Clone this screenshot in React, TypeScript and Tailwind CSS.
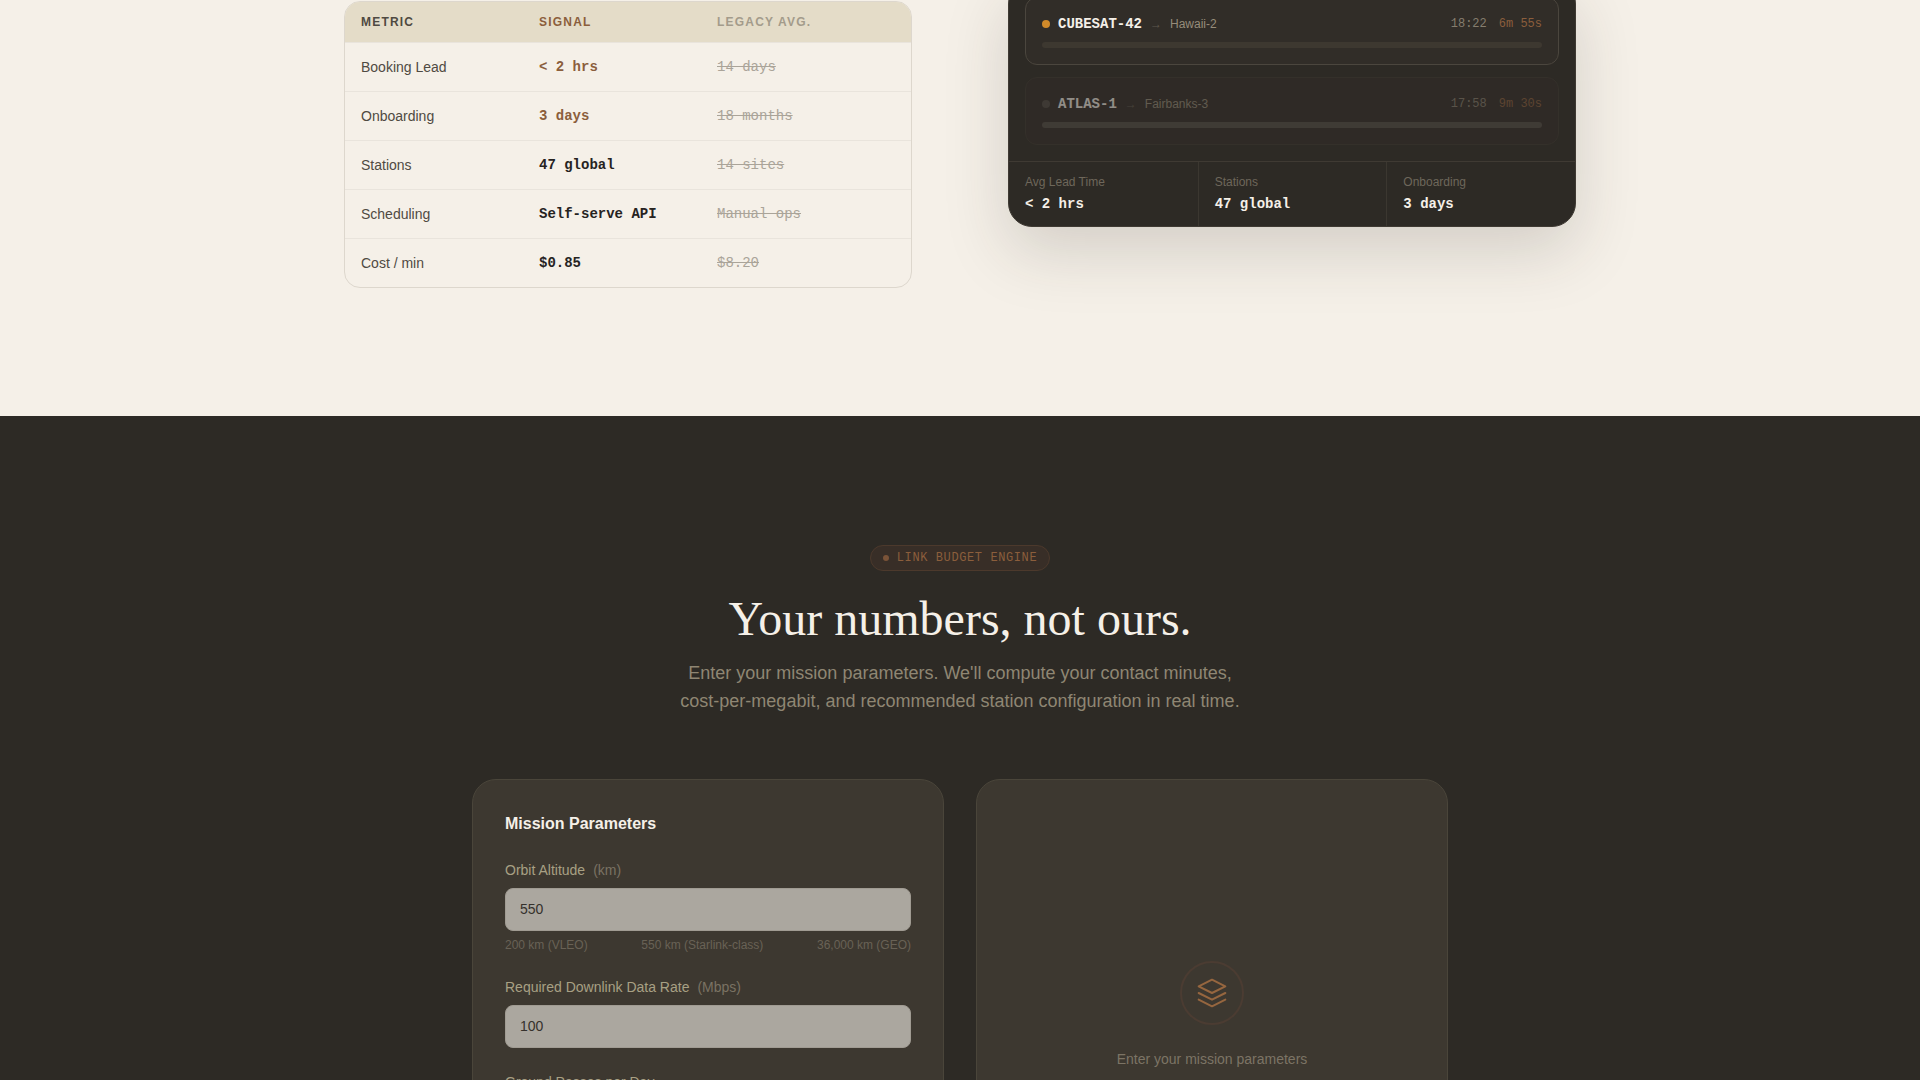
import type { ReactNode } from 'react'

const metrics = [
  { name: 'Booking Lead', signal: '< 2 hrs', legacy: '14 days', accent: true },
  { name: 'Onboarding', signal: '3 days', legacy: '18 months', accent: true },
  { name: 'Stations', signal: '47 global', legacy: '14 sites', accent: false },
  { name: 'Scheduling', signal: 'Self-serve API', legacy: 'Manual ops', accent: false },
  { name: 'Cost / min', signal: '$0.85', legacy: '$8.20', accent: false },
]

const stats = [
  { label: 'Avg Lead Time', value: '< 2 hrs' },
  { label: 'Stations', value: '47 global' },
  { label: 'Onboarding', value: '3 days' },
]

function MetricsTable() {
  return (
    <div className="mt-[21px] overflow-hidden rounded-2xl border border-[#ddd7cd]">
      <table className="block">
        <thead className="block bg-[#e4dcc8]">
          <tr className="grid grid-cols-3 px-4 py-3 text-left text-xs tracking-widest">
            <th className="font-semibold text-[#4f4a42]">METRIC</th>
            <th className="font-semibold text-[#8b5e3c]">SIGNAL</th>
            <th className="font-semibold text-[#a39b8b]">LEGACY AVG.</th>
          </tr>
        </thead>
        <tbody className="block">
          {metrics.map((m) => (
            <tr key={m.name} className="grid grid-cols-3 border-t border-[#e9e4dc] px-4 py-3.5 text-sm">
              <td className="text-[#4f4a42]">{m.name}</td>
              <td
                className={
                  m.accent
                    ? 'font-["Liberation_Mono",monospace] font-semibold text-[#8b5e3c]'
                    : 'font-["Liberation_Mono",monospace] font-semibold text-[#26231f]'
                }
              >
                {m.signal}
              </td>
              <td className='font-["Liberation_Mono",monospace] text-[#aaa499] line-through'>{m.legacy}</td>
            </tr>
          ))}
        </tbody>
      </table>
    </div>
  )
}

type PassProps = {
  name: string
  station: string
  time: string
  duration: string
  past?: boolean
}

function PassCard({ name, station, time, duration, past }: PassProps) {
  return (
    <div
      className={
        past
          ? 'rounded-xl border border-[#3b362f] bg-[#322b28] p-4 opacity-50'
          : 'rounded-xl border border-[#4b463e] bg-[#312d28] p-4'
      }
    >
      <div className="mb-2 flex items-center justify-between">
        <div className="flex items-center gap-2">
          <span className={past ? 'size-2 rounded-full bg-[#4f4943]' : 'size-2 rounded-full bg-[#d08a2a]'} />
          <span className='font-["Liberation_Mono",monospace] text-sm font-semibold text-[#f5f0e8]'>{name}</span>
          <span className="text-xs text-[#5f594e]">→</span>
          <span className="text-xs text-[#968c7a]">{station}</span>
        </div>
        <div className='flex items-center gap-3 font-["Liberation_Mono",monospace] text-xs'>
          <span className="text-[#857d6e]">{time}</span>
          <span className="text-[#8b5e3c]">{duration}</span>
        </div>
      </div>
      <div className={past ? 'h-1.5 rounded-full bg-[#524c46]' : 'h-1.5 rounded-full bg-[#3d3830]'} />
    </div>
  )
}

function PassSchedule() {
  return (
    <div className="overflow-hidden rounded-3xl border border-[#3f3a33] bg-[#2d2a25] shadow-[0_24px_64px_rgba(45,42,37,0.17)]">
      <div className="space-y-3 p-4">
        <PassCard name="CUBESAT-42" station="Hawaii-2" time="18:22" duration="6m 55s" />
        <PassCard name="ATLAS-1" station="Fairbanks-3" time="17:58" duration="9m 30s" past />
      </div>
      <div className="grid grid-cols-3 border-t border-[#3f3a33]">
        {stats.map((s, i) => (
          <div key={s.label} className={i > 0 ? 'border-l border-[#3b3730] px-4 py-3' : 'px-4 py-3'}>
            <div className="text-xs text-[#6e675b]">{s.label}</div>
            <div className='mt-1 font-["Liberation_Mono",monospace] text-sm font-semibold text-[#f5f0e8]'>
              {s.value}
            </div>
          </div>
        ))}
      </div>
    </div>
  )
}

type FieldProps = {
  id: string
  label: string
  unit: string
  value: string
  children?: ReactNode
}

function Field({ id, label, unit, value, children }: FieldProps) {
  return (
    <div>
      <label htmlFor={id} className="mb-2 flex gap-2 text-sm text-[#a8a084]">
        {label}
        <span className="text-[#7a7263]">({unit})</span>
      </label>
      <input
        id={id}
        type="text"
        defaultValue={value}
        className="block h-[43px] w-full rounded-lg border border-[#a09b92] bg-[#aba79f] px-3.5 pb-0.5 text-sm text-[#35312c]"
      />
      {children}
    </div>
  )
}

function MissionForm() {
  return (
    <form className="rounded-3xl border border-[#4a453a] bg-[#3d3830] p-8">
      <h3 className="mb-6 text-base font-semibold text-[#f5f0e8]">Mission Parameters</h3>
      <div className="space-y-6">
        <Field id="altitude" label="Orbit Altitude" unit="km" value="550">
          <div className="mt-1.5 flex justify-between text-xs text-[#696256]">
            <span>200 km (VLEO)</span>
            <span>550 km (Starlink-class)</span>
            <span>36,000 km (GEO)</span>
          </div>
        </Field>
        <Field id="rate" label="Required Downlink Data Rate" unit="Mbps" value="100" />
        <div>
          <label htmlFor="passes" className="mb-2 block text-sm text-[#a8a084]">
            Ground Passes per Day
          </label>
          <input
            id="passes"
            type="text"
            className="block h-[43px] w-full rounded-lg border border-[#a09b92] bg-[#aba79f] px-3.5 pb-0.5 text-sm text-[#35312c]"
          />
        </div>
      </div>
    </form>
  )
}

function ResultPlaceholder() {
  return (
    <div className="flex min-h-[472px] flex-col items-center justify-center rounded-3xl border border-[#4a453a] bg-[#3d3830] p-8">
      <div className="mb-6 flex size-16 items-center justify-center rounded-full border-2 border-[#4b3c32]">
        <svg
          viewBox="0 0 24 24"
          className="size-8 text-[#96663f]"
          fill="none"
          stroke="currentColor"
          strokeWidth="1.5"
          strokeLinecap="round"
          strokeLinejoin="round"
        >
          <path d="M12 2L2 7l10 5 10-5-10-5z" />
          <path d="M2 12l10 5 10-5" />
          <path d="M2 17l10 5 10-5" />
        </svg>
      </div>
      <p className="text-sm text-[#7c7465]">Enter your mission parameters</p>
    </div>
  )
}

export default function App() {
  return (
    <main className='h-screen overflow-hidden bg-[#2d2a25] font-["Liberation_Sans",Arial,sans-serif]'>
      <section className="overflow-hidden bg-[#f5f0e8] pb-32">
        <div className="mx-auto -mt-5 grid max-w-7xl grid-cols-2 items-start gap-24 px-6">
          <MetricsTable />
          <PassSchedule />
        </div>
      </section>

      <section className="bg-[#2d2a25] pt-32">
        <div className="mx-auto max-w-5xl px-6">
          <div className="mb-16 flex flex-col items-center pt-px text-center">
            <div className='mb-6 flex items-center gap-2 rounded-full border border-[#4c392c] bg-[#382e27] px-3 py-1 font-["Liberation_Mono",monospace] text-xs tracking-wider text-[#8b5e3c]'>
              <span className="size-1.5 rounded-full bg-[#7a5338]" />
              LINK BUDGET ENGINE
            </div>
            <h2 className='mb-4 font-["Liberation_Serif",serif] text-5xl text-[#f5f0e8]'>Your numbers, not ours.</h2>
            <p className="max-w-xl text-lg text-[#8f8673]">
              Enter your mission parameters. We'll compute your contact minutes, cost-per-megabit, and recommended
              station configuration in real time.
            </p>
          </div>
          <div className="grid grid-cols-2 gap-8">
            <MissionForm />
            <ResultPlaceholder />
          </div>
        </div>
      </section>
    </main>
  )
}
